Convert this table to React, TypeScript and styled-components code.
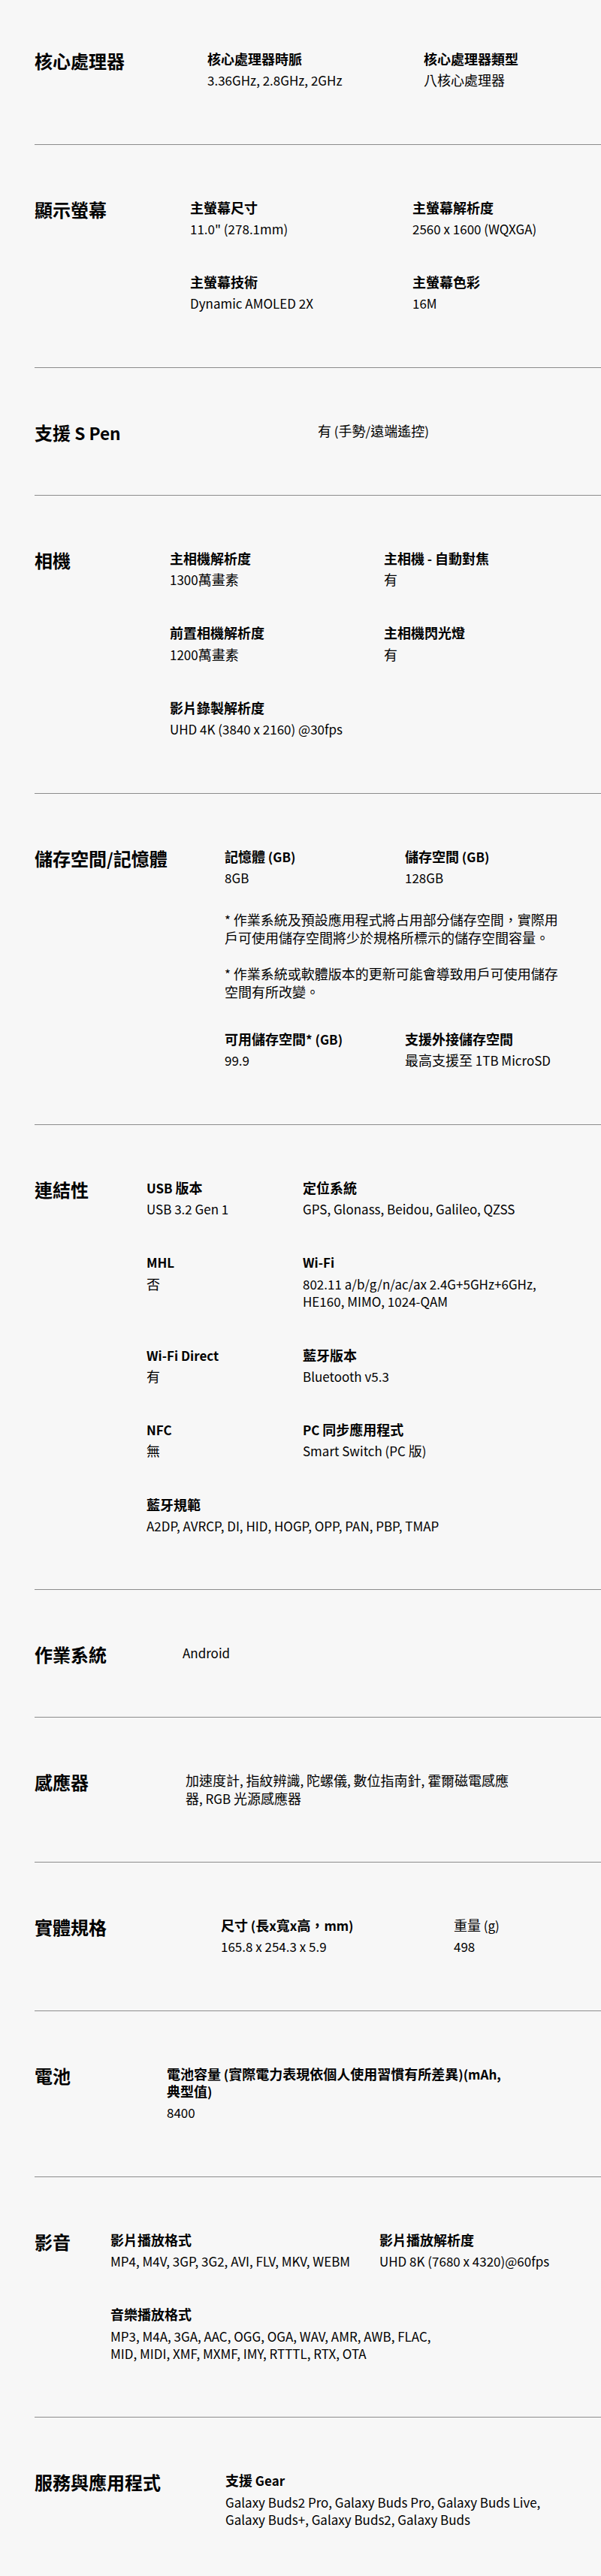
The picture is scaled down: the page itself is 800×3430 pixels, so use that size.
import React from "react";
import styled, { createGlobalStyle } from "styled-components";

const GlobalStyle = createGlobalStyle`
  html, body {
    margin: 0;
    padding: 0;
    background: #f7f7f7;
  }
  body {
    font-family: "Noto Sans CJK TC", "Noto Sans", sans-serif;
    color: #000;
  }
`;

const Page = styled.main`
  padding-left: 46px;
  background: #f7f7f7;
`;

const Section = styled.section`
  display: flex;
  align-items: flex-start;
  padding: 72px 0 73px;
  border-bottom: 1px solid #8c8c8c;
  &:first-child {
    padding-top: 67px;
  }
`;

const Title = styled.h2<{ $lead: number }>`
  flex: 0 0 ${(p) => p.$lead}px;
  margin: 0;
  padding-top: 4px;
  font-size: 24px;
  line-height: 20px;
  font-weight: 700;
  white-space: nowrap;
`;

const Details = styled.div<{ $col?: number }>`
  flex: 1 1 auto;
  display: grid;
  grid-template-columns: ${(p) => (p.$col ? `${p.$col}px auto` : "auto")};
  justify-content: start;
  row-gap: 48px;
`;

const Item = styled.div<{ $span?: boolean }>`
  grid-column: ${(p) => (p.$span ? "1 / -1" : "auto")};
`;

const Label = styled.h3<{ $plain?: boolean }>`
  margin: 0;
  font-size: 18px;
  line-height: 23.4px;
  font-weight: ${(p) => (p.$plain ? 400 : 700)};
  white-space: nowrap;
`;

const Value = styled.p<{ $solo?: boolean }>`
  margin: ${(p) => (p.$solo ? "0" : "4.8px 0 0")};
  font-size: 18px;
  line-height: 23.4px;
  font-weight: 400;
  white-space: nowrap;
`;

const NoteGroup = styled.div`
  grid-column: 1 / -1;
  margin: -16px 0 -8px;
  display: flex;
  flex-direction: column;
  gap: 24px;
`;

const Note = styled.p`
  margin: 0;
  font-size: 18px;
  line-height: 24px;
  white-space: nowrap;
`;

/* Latin runs are set a touch smaller than the CJK ideographs, as in the original font;
   a zero line-height keeps them from stretching the line boxes. */
const Latin = styled.span`
  font-size: 0.944em;
  line-height: 0;
`;

type Entry =
  | { kind: "spec"; label: string[]; value: string[]; span?: boolean; plain?: boolean }
  | { kind: "notes"; notes: string[][] };

type SectionData = {
  title: string;
  lead: number;
  col?: number;
  solo?: string[];
  entries?: Entry[];
};

const spec = (
  label: string | string[],
  value: string | string[],
  opts: { span?: boolean; plain?: boolean } = {}
): Entry => ({
  kind: "spec",
  label: Array.isArray(label) ? label : [label],
  value: Array.isArray(value) ? value : [value],
  ...opts,
});

const sections: SectionData[] = [
  {
    title: "核心處理器",
    lead: 230,
    col: 288,
    entries: [
      spec("核心處理器時脈", "3.36GHz, 2.8GHz, 2GHz"),
      spec("核心處理器類型", "八核心處理器"),
    ],
  },
  {
    title: "顯示螢幕",
    lead: 207,
    col: 296,
    entries: [
      spec("主螢幕尺寸", '11.0" (278.1mm)'),
      spec("主螢幕解析度", "2560 x 1600 (WQXGA)"),
      spec("主螢幕技術", "Dynamic AMOLED 2X"),
      spec("主螢幕色彩", "16M"),
    ],
  },
  {
    title: "支援 S Pen",
    lead: 377,
    solo: ["有 (手勢/遠端遙控)"],
  },
  {
    title: "相機",
    lead: 180,
    col: 285,
    entries: [
      spec("主相機解析度", "1300萬畫素"),
      spec("主相機 - 自動對焦", "有"),
      spec("前置相機解析度", "1200萬畫素"),
      spec("主相機閃光燈", "有"),
      spec("影片錄製解析度", "UHD 4K (3840 x 2160) @30fps"),
    ],
  },
  {
    title: "儲存空間/記憶體",
    lead: 253,
    col: 240,
    entries: [
      spec("記憶體 (GB)", "8GB"),
      spec("儲存空間 (GB)", "128GB"),
      {
        kind: "notes",
        notes: [
          ["* 作業系統及預設應用程式將占用部分儲存空間，實際用", "戶可使用儲存空間將少於規格所標示的儲存空間容量。"],
          ["* 作業系統或軟體版本的更新可能會導致用戶可使用儲存", "空間有所改變。"],
        ],
      },
      spec("可用儲存空間* (GB)", "99.9"),
      spec("支援外接儲存空間", "最高支援至 1TB MicroSD"),
    ],
  },
  {
    title: "連結性",
    lead: 149,
    col: 208,
    entries: [
      spec("USB 版本", "USB 3.2 Gen 1"),
      spec("定位系統", "GPS, Glonass, Beidou, Galileo, QZSS"),
      spec("MHL", "否"),
      spec("Wi-Fi", ["802.11 a/b/g/n/ac/ax 2.4G+5GHz+6GHz,", "HE160, MIMO, 1024-QAM"]),
      spec("Wi-Fi Direct", "有"),
      spec("藍牙版本", "Bluetooth v5.3"),
      spec("NFC", "無"),
      spec("PC 同步應用程式", "Smart Switch (PC 版)"),
      spec("藍牙規範", "A2DP, AVRCP, DI, HID, HOGP, OPP, PAN, PBP, TMAP", { span: true }),
    ],
  },
  {
    title: "作業系統",
    lead: 197,
    solo: ["Android"],
  },
  {
    title: "感應器",
    lead: 201,
    solo: ["加速度計, 指紋辨識, 陀螺儀, 數位指南針, 霍爾磁電感應", "器, RGB 光源感應器"],
  },
  {
    title: "實體規格",
    lead: 248,
    col: 310,
    entries: [
      spec("尺寸 (長x寬x高，mm)", "165.8 x 254.3 x 5.9"),
      spec("重量 (g)", "498", { plain: true }),
    ],
  },
  {
    title: "電池",
    lead: 176,
    entries: [
      spec(["電池容量 (實際電力表現依個人使用習慣有所差異)(mAh,", "典型值)"], "8400"),
    ],
  },
  {
    title: "影音",
    lead: 101,
    col: 358,
    entries: [
      spec("影片播放格式", "MP4, M4V, 3GP, 3G2, AVI, FLV, MKV, WEBM"),
      spec("影片播放解析度", "UHD 8K (7680 x 4320)@60fps"),
      spec(
        "音樂播放格式",
        ["MP3, M4A, 3GA, AAC, OGG, OGA, WAV, AMR, AWB, FLAC,", "MID, MIDI, XMF, MXMF, IMY, RTTTL, RTX, OTA"],
        { span: true }
      ),
    ],
  },
  {
    title: "服務與應用程式",
    lead: 254,
    entries: [
      spec("支援 Gear", [
        "Galaxy Buds2 Pro, Galaxy Buds Pro, Galaxy Buds Live,",
        "Galaxy Buds+, Galaxy Buds2, Galaxy Buds",
      ]),
    ],
  },
];

const CJK = /([\u2E80-\u303F\u3400-\u9FFF\uF900-\uFAFF\uFF00-\uFFEF]+)/;

const Runs: React.FC<{ text: string }> = ({ text }) => (
  <>
    {text
      .split(CJK)
      .filter((t) => t.length > 0)
      .map((t, i) => (CJK.test(t) ? <React.Fragment key={i}>{t}</React.Fragment> : <Latin key={i}>{t}</Latin>))}
  </>
);

const Lines: React.FC<{ lines: string[] }> = ({ lines }) => (
  <>
    {lines.map((l, i) => (
      <React.Fragment key={i}>
        {i > 0 && <br />}
        <Runs text={l} />
      </React.Fragment>
    ))}
  </>
);

export default function App() {
  return (
    <>
      <GlobalStyle />
      <Page>
        {sections.map((s) => (
          <Section key={s.title}>
            <Title $lead={s.lead}>
              <Runs text={s.title} />
            </Title>
            <Details $col={s.col}>
              {s.solo && (
                <Value $solo>
                  <Lines lines={s.solo} />
                </Value>
              )}
              {s.entries?.map((e, i) =>
                e.kind === "notes" ? (
                  <NoteGroup key={i}>
                    {e.notes.map((n, j) => (
                      <Note key={j}>
                        <Lines lines={n} />
                      </Note>
                    ))}
                  </NoteGroup>
                ) : (
                  <Item key={i} $span={e.span}>
                    <Label $plain={e.plain}>
                      <Lines lines={e.label} />
                    </Label>
                    <Value>
                      <Lines lines={e.value} />
                    </Value>
                  </Item>
                )
              )}
            </Details>
          </Section>
        ))}
      </Page>
    </>
  );
}
